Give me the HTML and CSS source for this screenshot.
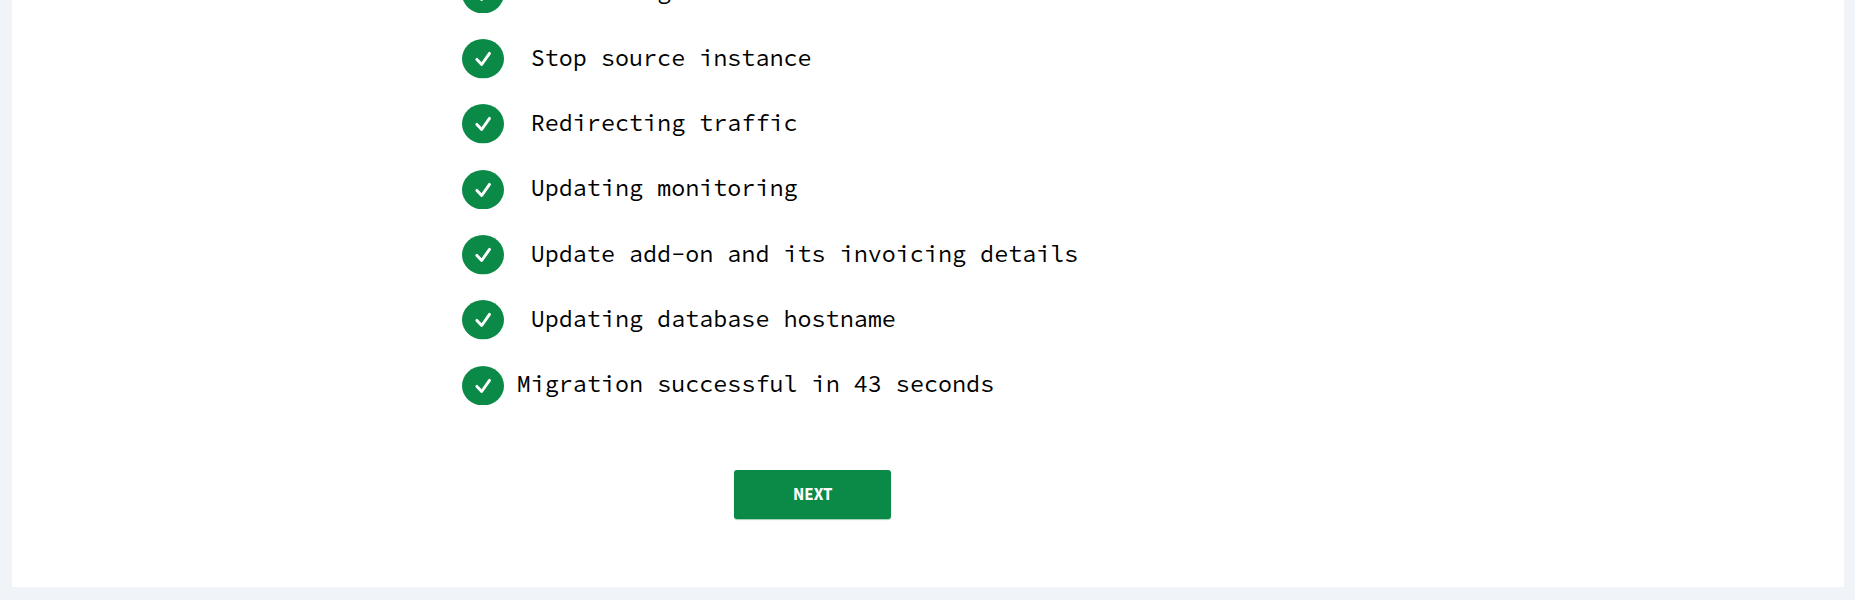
FILE: index.html
```html
<!DOCTYPE html>
<html lang="en">
<head>
<meta charset="utf-8">
<title>Migration</title>
<link rel="stylesheet" href="styles.css">
</head>
<body>
<svg class="sprite" width="0" height="0"><symbol id="check" viewBox="0 0 42 39.5"><ellipse cx="21" cy="19.75" rx="21" ry="19.75" fill="#0b8a47"/><path d="M14.9 20.4 L19.7 25.5 L27.5 14.4" fill="none" stroke="#fff" stroke-width="2.9" stroke-linecap="round" stroke-linejoin="round"/></symbol></svg>
<div class="page">
<main class="panel">
<ul class="steps">
<li class="step"><svg class="icon"><use href="#check"/></svg><span class="label">Restarting</span></li>
<li class="step"><svg class="icon"><use href="#check"/></svg><span class="label">Stop source instance</span></li>
<li class="step"><svg class="icon"><use href="#check"/></svg><span class="label">Redirecting traffic</span></li>
<li class="step"><svg class="icon"><use href="#check"/></svg><span class="label">Updating monitoring</span></li>
<li class="step"><svg class="icon"><use href="#check"/></svg><span class="label">Update add-on and its invoicing details</span></li>
<li class="step"><svg class="icon"><use href="#check"/></svg><span class="label">Updating database hostname</span></li>
<li class="step done"><svg class="icon"><use href="#check"/></svg><span class="label">Migration successful in 43 seconds</span></li>
</ul>
<button class="next">NEXT</button>
</main>
</div>
</body>
</html>
```
FILE: styles.css
```css
* { box-sizing: border-box; }
body { margin: 0; height: 602px; overflow: hidden; background: #fff; }
.sprite { display: block; }
.page { width: 1855px; height: 600px; background: #f0f3f8; padding: 0 11px 13px 12px; }
.panel { height: 587px; background: #fff; overflow: hidden; padding-left: 450px; }
.steps { list-style: none; margin: -39.2px 0 0; padding: 0; }
.step { display: flex; align-items: center; height: 65.33px; gap: 26.7px; }
.done { gap: 12.7px; }
.icon { width: 42px; height: 39.5px; flex: none; }
.label { margin-top: -2px; font: 23.42px/40px "Source Code Pro", "Noto Sans Mono CJK SC", "Liberation Mono", monospace; color: #000; white-space: pre; }
.step:first-child .label { margin-top: -4px; }
.next { display: block; margin: 52px 0 0 272px; width: 156.5px; height: 49px; padding: 1px 0 0 1px; border: 0; border-radius: 3px; background: #0b8a47; box-shadow: 0 1px 1px #0b8a4766; color: #fff; font: bold 17px/48px "Source Sans Pro", "Source Sans 3", "Noto Sans CJK SC", sans-serif; }
```
